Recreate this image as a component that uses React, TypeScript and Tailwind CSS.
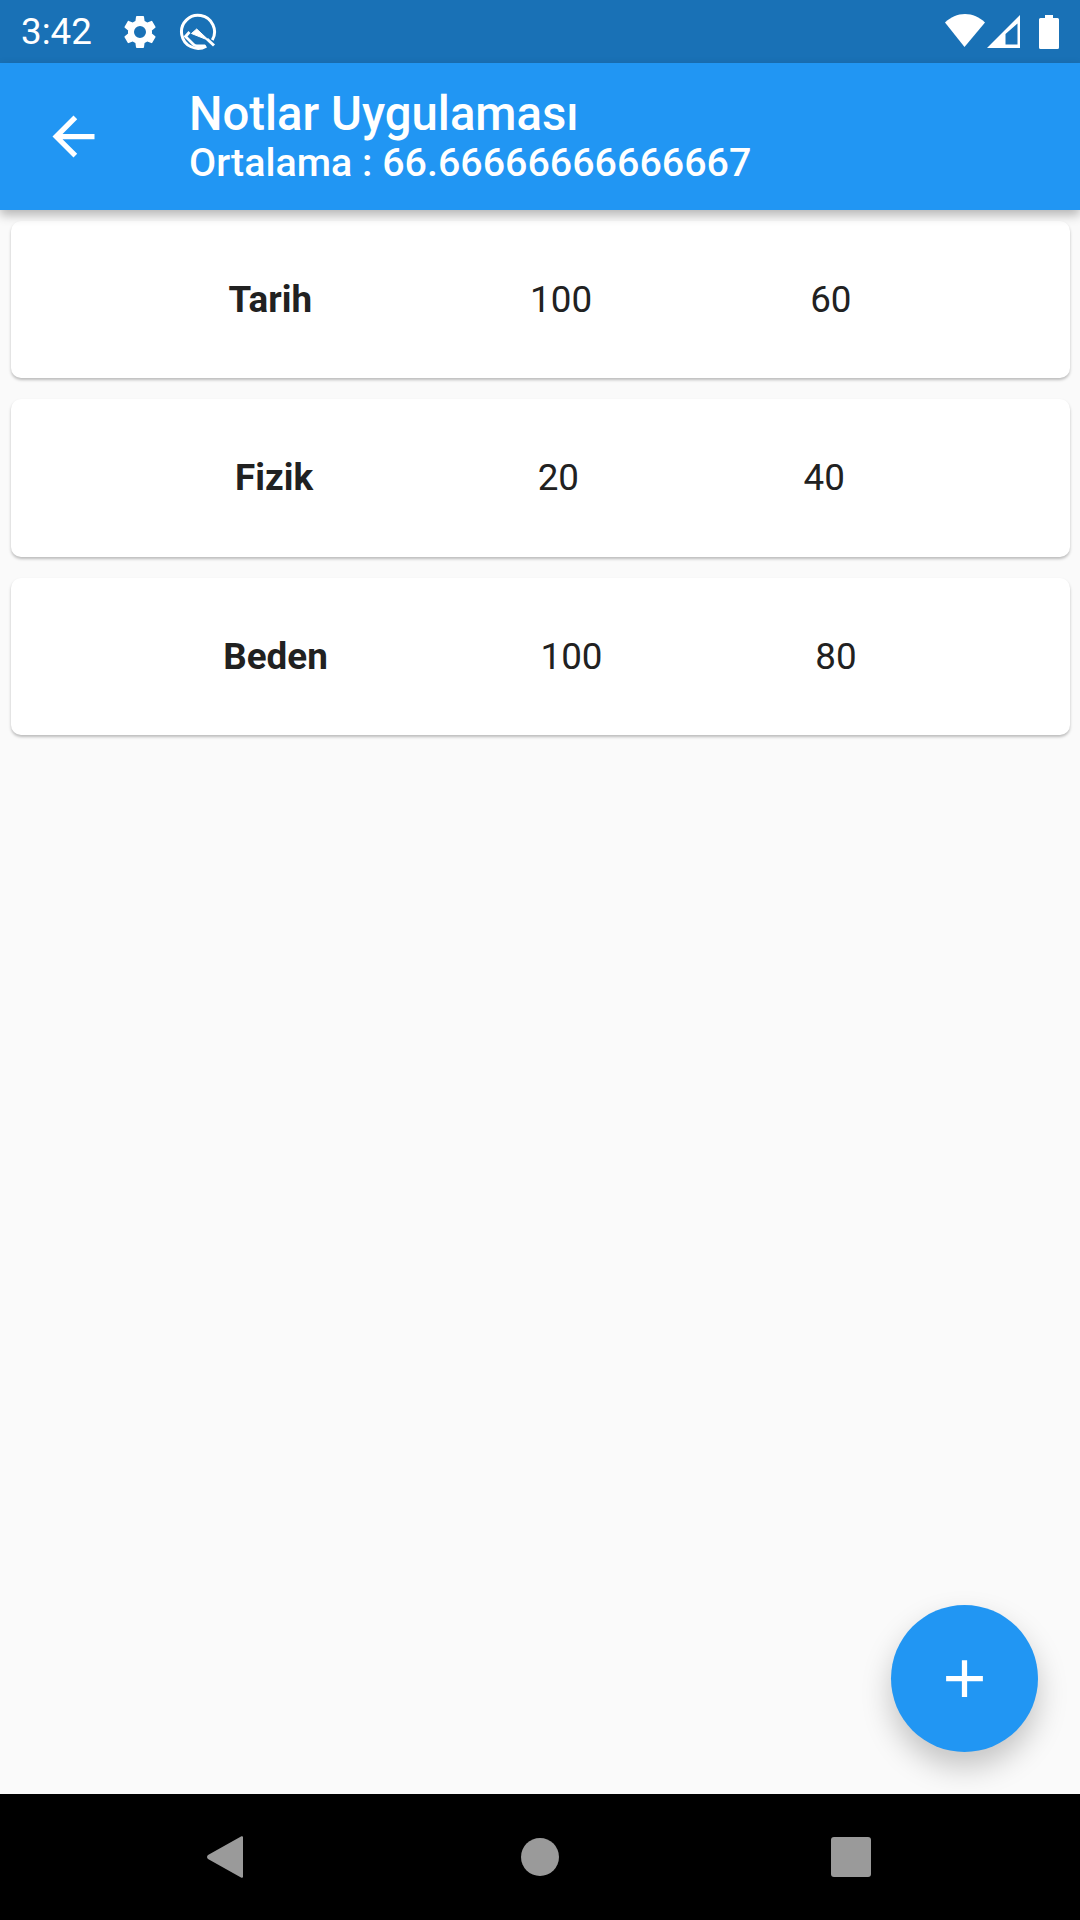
const rows = [
  ["Tarih", "100", "60"],
  ["Fizik", "20", "40"],
  ["Beden", "100", "80"],
];

function Gear() {
  return (
    <svg viewBox="0 0 24 24" className="w-[40px] h-[40px]" fill="#fff">
      <path d="M19.14 12.94c.04-.3.06-.61.06-.94 0-.32-.02-.64-.07-.94l2.03-1.58a.49.49 0 0 0 .12-.61l-1.92-3.32a.488.488 0 0 0-.59-.22l-2.39.96c-.5-.38-1.03-.7-1.62-.94l-.36-2.54a.484.484 0 0 0-.48-.41h-3.84c-.24 0-.43.17-.47.41l-.36 2.54c-.59.24-1.13.57-1.62.94l-2.39-.96c-.22-.08-.47 0-.59.22L2.74 8.87c-.12.21-.08.47.12.61l2.03 1.58c-.05.3-.09.63-.09.94s.02.64.07.94l-2.03 1.58a.49.49 0 0 0-.12.61l1.92 3.32c.12.22.37.29.59.22l2.39-.96c.5.38 1.03.7 1.62.94l.36 2.54c.05.24.24.41.48.41h3.84c.24 0 .44-.17.47-.41l.36-2.54c.59-.24 1.13-.56 1.62-.94l2.39.96c.22.08.47 0 .59-.22l1.92-3.32c.12-.22.07-.47-.12-.61l-2.01-1.58zM12 15.6A3.6 3.6 0 1 1 12 8.4a3.6 3.6 0 0 1 0 7.2z" />
    </svg>
  );
}

function QLogo() {
  return (
    <svg viewBox="0 0 40 40" className="w-[40px] h-[40px]" fill="none" stroke="#fff">
      <path d="M28.250 34.100A16.500 16.500 0 1 1 34.300 28.050" strokeWidth="3" />
      <path d="M18.700 17 31 28.500 13.500 21.500z" fill="#fff" strokeWidth="1" strokeLinejoin="round" />
      <path d="M29 27 36 33.500" strokeWidth="3" />
      <path d="M11.500 20 7.500 24.500l8 8c1 1 2.200 1.300 3.500 1.300h8" strokeWidth="2.800" />
    </svg>
  );
}

function StatusRight() {
  return (
    <div className="flex items-center">
      <svg viewBox="0 0 40 33" className="w-[40px] h-[33px] -mt-[2px]" fill="#fff">
        <path d="M0 8.500C5.500 3.200 12.500 0 20 0s14.500 3.200 20 8.500L19.500 33z" />
      </svg>
      <svg viewBox="0 0 33 33" className="w-[33px] h-[33px] ml-[2px]" fill="#fff" fillRule="evenodd">
        <path d="M33 0v33H0zM30.500 8.500 18.500 19v10.500H30.500z" />
      </svg>
      <svg viewBox="0 0 20 34" className="w-[20px] h-[34px] ml-[19px]" fill="#fff">
        <path d="M6 0h8v3h4.500A1.500 1.500 0 0 1 20 4.500v28a1.500 1.500 0 0 1-1.500 1.500h-17A1.500 1.500 0 0 1 0 32.500v-28A1.500 1.500 0 0 1 1.500 3H6z" />
      </svg>
    </div>
  );
}

export default function App() {
  return (
    <div
      className="relative w-[1080px] h-[1920px] flex flex-col bg-[#fafafa] overflow-hidden"
      style={{ fontFamily: "Roboto, sans-serif" }}
    >
      <div className="h-[63px] shrink-0 bg-[#1971b6] text-white flex items-center justify-between pl-[21px] pr-[21px]">
        <div className="flex items-center">
          <span className="text-[36.75px] leading-none w-[99px] pt-[2px]">3:42</span>
          <Gear />
          <span className="ml-[18px] flex">
            <QLogo />
          </span>
        </div>
        <StatusRight />
      </div>

      <div className="relative z-10 h-[147px] shrink-0 bg-[#2196f3] text-white flex items-center shadow-[0_5px_10px_rgba(0,0,0,0.28)]">
        <div className="w-[147px] pl-[42px] shrink-0 flex">
          <svg viewBox="0 0 24 24" className="w-[63px] h-[63px]" fill="#fff">
            <path d="M20 11H7.830l5.590-5.590L12 4l-8 8 8 8 1.410-1.410L7.830 13H20v-2z" />
          </svg>
        </div>
        <div className="ml-[42px] flex flex-col">
          <span className="text-[47.25px] leading-[52px] font-medium">Notlar Uygulaması</span>
          <span className="text-[39.4px] leading-[46px] font-medium">Ortalama : 66.66666666666667</span>
        </div>
      </div>

      <div className="relative flex-1 px-[10.5px] pt-[10.5px] flex flex-col gap-[21px]">
        {rows.map((r) => (
          <div
            key={r[0]}
            className="h-[157.5px] bg-white rounded-[10px] flex items-center justify-evenly text-[#212121] text-[36.75px] shadow-[0_2px_3px_rgba(0,0,0,0.25)]"
          >
            <span className="font-bold">{r[0]}</span>
            <span>{r[1]}</span>
            <span>{r[2]}</span>
          </div>
        ))}
        <div className="absolute right-[42px] bottom-[42px] w-[147px] h-[147px] rounded-full bg-[#2196f3] flex items-center justify-center shadow-[0_15px_30px_rgba(0,0,0,0.22)]">
          <svg viewBox="0 0 24 24" className="w-[63px] h-[63px]" fill="#fff">
            <path d="M19 13h-6v6h-2v-6H5v-2h6V5h2v6h6v2z" />
          </svg>
        </div>
      </div>

      <div className="h-[126px] shrink-0 bg-black flex items-center justify-center pr-[2px]">
        <svg viewBox="0 0 36 42" className="w-[36px] h-[42px]" fill="#9a9a9a">
          <path d="M36 1.500v39c0 1.200-1 1.800-2 1L1 23c-1.300-1-1.300-3 0-4L34 .5c1-.8 2-.2 2 1z" />
        </svg>
        <div className="w-[38px] h-[38px] ml-[278px] rounded-full bg-[#9a9a9a]" />
        <div className="w-[40px] h-[40px] ml-[272px] rounded-[3px] bg-[#9a9a9a]" />
      </div>
    </div>
  );
}
